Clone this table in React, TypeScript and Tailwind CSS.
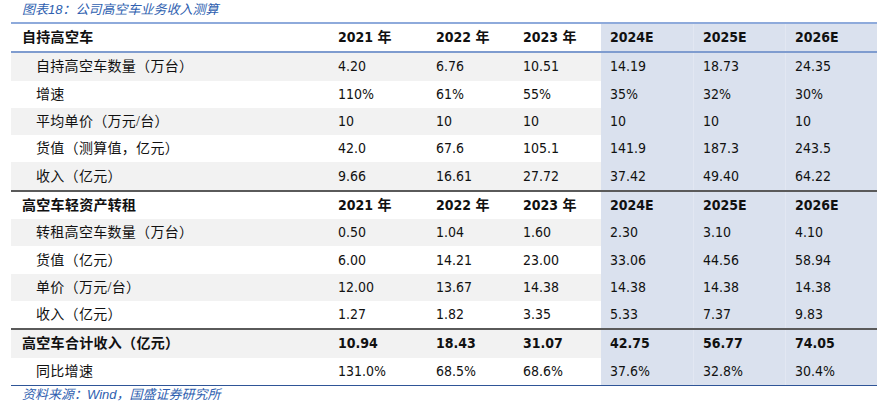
const cn = '"Liberation Serif", "Noto Sans CJK SC", serif'
const num = '"DejaVu Sans Condensed", "Liberation Sans", "Noto Sans CJK SC", sans-serif'

type Row = { label: string; vals: string[]; kind: "head" | "sub" | "total" }

const section1: Row[] = [
    { label: "自持高空车", vals: ["2021 年", "2022 年", "2023 年", "2024E", "2025E", "2026E"], kind: "head" },
    { label: "自持高空车数量（万台）", vals: ["4.20", "6.76", "10.51", "14.19", "18.73", "24.35"], kind: "sub" },
    { label: "增速", vals: ["110%", "61%", "55%", "35%", "32%", "30%"], kind: "sub" },
    { label: "平均单价（万元/台）", vals: ["10", "10", "10", "10", "10", "10"], kind: "sub" },
    { label: "货值（测算值，亿元）", vals: ["42.0", "67.6", "105.1", "141.9", "187.3", "243.5"], kind: "sub" },
    { label: "收入（亿元）", vals: ["9.66", "16.61", "27.72", "37.42", "49.40", "64.22"], kind: "sub" },
]

const section2: Row[] = [
    { label: "高空车轻资产转租", vals: ["2021 年", "2022 年", "2023 年", "2024E", "2025E", "2026E"], kind: "head" },
    { label: "转租高空车数量（万台）", vals: ["0.50", "1.04", "1.60", "2.30", "3.10", "4.10"], kind: "sub" },
    { label: "货值（亿元）", vals: ["6.00", "14.21", "23.00", "33.06", "44.56", "58.94"], kind: "sub" },
    { label: "单价（万元/台）", vals: ["12.00", "13.67", "14.38", "14.38", "14.38", "14.38"], kind: "sub" },
    { label: "收入（亿元）", vals: ["1.27", "1.82", "3.35", "5.33", "7.37", "9.83"], kind: "sub" },
]

const section3: Row[] = [
    { label: "高空车合计收入（亿元）", vals: ["10.94", "18.43", "31.07", "42.75", "56.77", "74.05"], kind: "total" },
    { label: "同比增速", vals: ["131.0%", "68.5%", "68.6%", "37.6%", "32.8%", "30.4%"], kind: "sub" },
]

const TableRow = ({ row, grey }: { row: Row; grey: boolean }) => {
    const bold = row.kind !== "sub"
    const base = grey ? "bg-[#f2f2f2]" : "bg-white"
    return (
        <div className="grid grid-cols-[318px_98px_87px_87px_92px_92px_92px] h-[27.3px] text-[14px] text-[#111]">
            <div
                className={`${base} flex items-center tracking-[0.3px] ${row.kind === "sub" ? "pl-[25px]" : "pl-[11px] font-bold"}`}
                style={{ fontFamily: cn }}
            >
                {row.label}
            </div>
            {row.vals.map((v, i) => (
                <div
                    key={i}
                    className={`flex items-center pl-[9px] ${i >= 3 ? "bg-[#dae1ee]" : base} ${i >= 4 ? "border-l border-[#e2e7f2]" : ""} ${bold ? "font-bold" : ""}`}
                    style={{ fontFamily: num }}
                >
                    {v}
                </div>
            ))}
        </div>
    )
}

const App = () => {
    return (
        <div className="w-[884px] h-[414px] bg-white relative">
            <div
                className="h-[22px] pl-[22px] pt-[2px] text-[13px] italic text-[#2f5fb0] leading-[16px]"
                style={{ fontFamily: '"Liberation Sans", "Noto Sans CJK SC", sans-serif' }}
            >
                图表18：公司高空车业务收入测算
            </div>
            <div className="ml-[11px] w-[866px]">
                <div className="border-t-2 border-[#8eaadb]">
                    {section1.map((r, i) => (
                        <div key={i} className={i === 0 ? "border-b-2 border-[#7f9ccf]" : ""}>
                            <TableRow row={r} grey={i % 2 === 1} />
                        </div>
                    ))}
                </div>
                <div className="border-t-2 border-[#5a5a5a]">
                    {section2.map((r, i) => (
                        <TableRow key={i} row={r} grey={i % 2 === 1} />
                    ))}
                </div>
                <div className="border-t-2 border-[#5a5a5a] border-b border-b-[#2f5597]">
                    {section3.map((r, i) => (
                        <TableRow key={i} row={r} grey={i === 0} />
                    ))}
                </div>
            </div>
            <div
                className="pl-[22px] pt-[1px] text-[13px] italic text-[#2f5fb0] leading-[16px]"
                style={{ fontFamily: '"Liberation Sans", "Noto Sans CJK SC", sans-serif' }}
            >
                资料来源：Wind，国盛证券研究所
            </div>
        </div>
    )
}

export default App
